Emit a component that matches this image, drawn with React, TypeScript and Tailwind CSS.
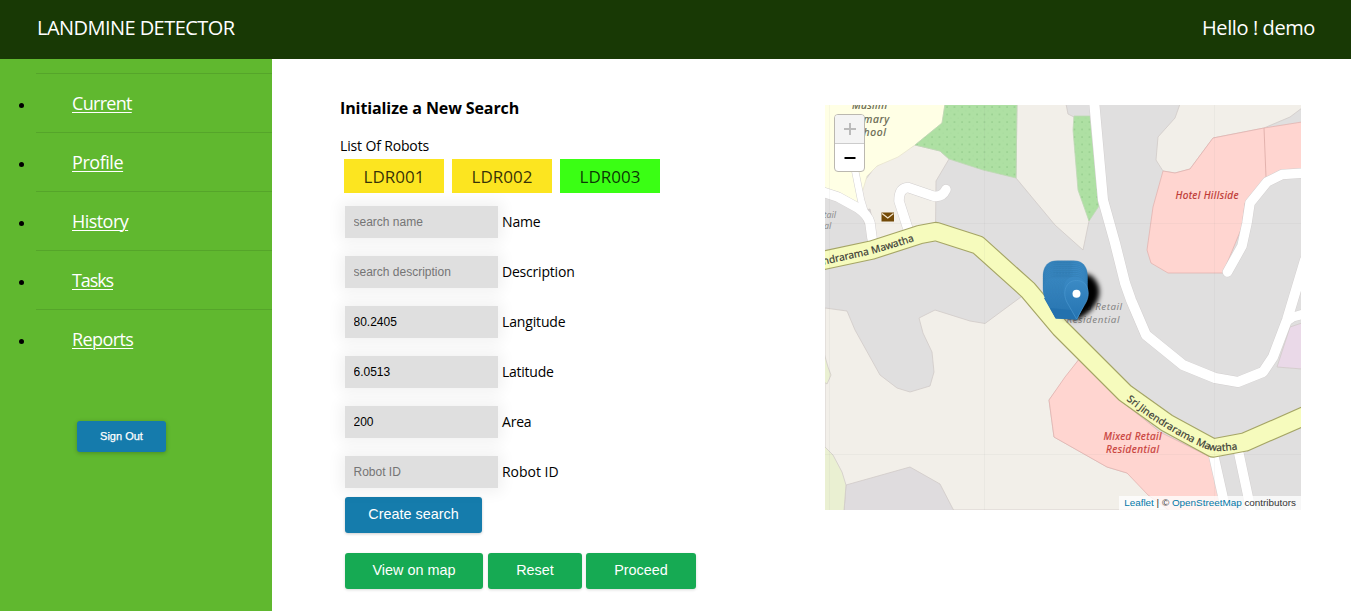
import React from "react";

const links = [
  { label: "Current", track: "tracking-[-0.7px]" },
  { label: "Profile", track: "tracking-[-0.45px]" },
  { label: "History", track: "tracking-[-0.55px]" },
  { label: "Tasks", track: "tracking-[-1.1px]" },
  { label: "Reports", track: "tracking-[-0.6px]" },
];

const robots = [
  { id: "LDR001", color: "bg-[#fce520]" },
  { id: "LDR002", color: "bg-[#fce520]" },
  { id: "LDR003", color: "bg-[#3aff14]" },
];

const fields = [
  { label: "Name", placeholder: "search name", value: "", track: "tracking-[-0.15px]" },
  { label: "Description", placeholder: "search description", value: "", track: "tracking-[-0.2px]" },
  { label: "Langitude", placeholder: "", value: "80.2405", track: "tracking-[-0.15px]" },
  { label: "Latitude", placeholder: "", value: "6.0513", track: "tracking-[-0.25px]" },
  { label: "Area", placeholder: "", value: "200", track: "tracking-[-0.2px]" },
  { label: "Robot ID", placeholder: "Robot ID", value: "", track: "tracking-[-0.02px]" },
];

const mainRoad =
  "M-10 157 L0 155 L47 145 L95 129.5 L111 126.5 L153 140 L203 185 L235 223 L300 288 L342 318 L388 343 L420 337 L484 309";

const whiteRoads = [
  { d: "M269 -5 L278 95 L290 138 L300 178 L306 195 L321 230 L358 260 L390 273 L413 277 L438 267 L448 252 L462 215 L468 195 L480 155", w: 10 },
  { d: "M462 216 L468 212 L482 208", w: 9 },
  { d: "M402.5 167 L417 141 L422 118 L425 98 L442 77 L457 69.5 L482 68", w: 9.5 },
  { d: "M83 124 L74 96 Q74 83 83 82.5 L108 91 Q117 93 121 84.5", w: 9.5 },
  { d: "M-5 86 L13 92 L33 103 Q43 110 45 118 L47 133", w: 9.5 },
  { d: "M29 60 L36 95 L40 108", w: 6.5 },
  { d: "M389 352 L402 410", w: 9.5 },
  { d: "M414 349 L427 410", w: 9.5 },
];

const pins: { x: number; y: number }[] = [];
for (let y = 197; y <= 214.1; y += 1.9) {
  for (let x = 230.5; x <= 250.6; x += 1.5) {
    pins.push({ x, y });
  }
}

const pinPath =
  "M0 0 L-10 -18 C-15 -28 -11.5 -41 0 -41 C11.5 -41 15 -28 10 -18 Z";

function StreetMap() {
  return (
    <svg width="476" height="405" viewBox="0 0 476 405" className="block">
      <defs>
        <pattern id="trees" width="7.5" height="7.5" patternUnits="userSpaceOnUse">
          <rect width="7.5" height="7.5" fill="#aee0a3" />
          <circle cx="2" cy="2" r="0.75" fill="#8fc787" />
          <circle cx="5.7" cy="5.7" r="0.5" fill="#a2d698" />
        </pattern>
        <linearGradient id="pin" x1="0" y1="0" x2="0" y2="1">
          <stop offset="0" stopColor="#3b8ac4" />
          <stop offset="1" stopColor="#2574b2" />
        </linearGradient>
        <filter id="soft" x="-50%" y="-50%" width="200%" height="200%">
          <feGaussianBlur stdDeviation="2.6" />
        </filter>
        <path id="road-west" d="M-65 173 L0 159.500 L47 149 Q75 141 95 134" />
        <path id="road-east" d="M299 293 Q320 311 342 323.500 Q366 338 384 345 Q398 348 425 342" />
      </defs>

      <rect width="476" height="405" fill="#e0dfdf" />

      <g stroke="#d0cac8" strokeWidth="0.8">
        <path fill="#f2efe9" d="M0 203 L22 206 L30 225 L55 270 L72 283 L85 287 L105 281 L109 267 L107 247 L98 228 L94 213 L110 205 L145 216 L160 218.500 L200 189 L255 253 L224 295 L229 332 L282 362 L302 368 L345 405 L0 405 Z" />
        <path fill="#dfdcde" d="M21 380 L85 362 L115 379 L129 406 L19 406 Z" />
        <path fill="#eaf0d2" d="M-1 341 L8 350 L17 367 L21 380 L19 406 L-1 406 Z" />
        <path fill="#eaf0d2" d="M-1 248 L3 262 L6 270 L2 279 L-1 277 Z" />
        <path fill="#f2efe9" d="M90 40 L115 46 L124 54 L111 76 L110.500 126 L50 146 L33 100 L38 78 L50 62 Z" />
        <path fill="#ffffe5" stroke="#e9e5cf" d="M-1 -1 L120 -1 L117 18 L90 40 L73 52 L52 61 L42 71 L37 88 L33 103 L13 92 L-1 86 Z" />
        <path fill="#f2efe9" d="M192 -1 L241 -1 L243 9 L249 12 L264 116 L258 145 L230 120 L191 73 Z" />
        <path fill="url(#trees)" stroke="#bfd8b5" d="M120 -1 L192 -1 L191 73 L158 65 L124 54 L115 46 L90 40 L117 18 Z" />
        <path fill="url(#trees)" stroke="#bfd8b5" d="M249 11 L265 11 L274 101 L264 116 L253 85 L248 25 Z" />
        <path fill="#f2efe9" d="M355 -1 L350 13 L333 32 L331 55 L338 66 L350 68 L365 64 L388 33 L439 23 L465 12 L477 3 L477 -1 Z" />
        <path fill="#ffd5d0" stroke="#e2b4b0" d="M388 33 L439 23 L477 17 L477 65 L442 72 L420 98 L417 122 L398 168 L343 168 L326 158 L322 145 L328 102 L338 66 L350 68 L365 64 Z" />
        <path fill="none" stroke="#dca9a5" d="M439 23 L441 72" />
        <path fill="#ffd5d0" stroke="#e2b4b0" d="M255 253 L295 295 L335 327 L385 352 L395 391 L400 406 L345 406 L323 390 L302 368 L282 362 L229 332 L224 295 L240 272 Z" />
        <path fill="#ead9e8" d="M477 218 L465 222 L452 262 L477 264 Z" />
        <path fill="#d5d3d5" d="M38 106 L45 104 L48 118 Z" />
      </g>

      <g fill="none" strokeLinejoin="round" strokeLinecap="round">
        {whiteRoads.map((r) => (
          <path key={r.d} d={r.d} stroke="#d3d0d0" strokeWidth={r.w + 1} />
        ))}
        {whiteRoads.map((r) => (
          <path key={r.d} d={r.d} stroke="#ffffff" strokeWidth={r.w} />
        ))}
      </g>
      <g fill="none" strokeLinejoin="round">
        <path d={mainRoad} stroke="#a5a566" strokeWidth="19.500" />
        <path d={mainRoad} stroke="#f6fbbd" strokeWidth="17.200" />
      </g>

      <path
        d="M4.500 0 V405 M159.500 0 V405 M389.500 0 V405 M0 118.500 H476 M0 349.500 H476"
        stroke="#8a8a8a"
        strokeOpacity="0.090"
        strokeWidth="0.800"
      />

      <g className="font-['Noto_Sans'] italic" fontSize="10.400" textAnchor="middle">
        <g fill="#66664f" stroke="#66664f" strokeWidth="0.200">
          <text x="44.500" y="3.500" textLength="35">Muslim</text>
          <text x="44" y="17.500" textLength="40">Primary</text>
          <text x="44" y="30.500" textLength="34">School</text>
        </g>
        <g fill="#8d8d8d" fontSize="8.800">
          <text x="0" y="112.500">Retail</text>
          <text x="-15" y="124">Residential</text>
        </g>
        <g fill="#858585" fontSize="9.800">
          <text x="268" y="205" textLength="58">Mixed Retail</text>
          <text x="268" y="218" textLength="53">Residential</text>
        </g>
        <g fill="#c9423c" stroke="#c9423c" strokeWidth="0.200" fontSize="10">
          <text x="382" y="93.500" fill="#b93632" textLength="63">Hotel Hillside</text>
          <text x="307.500" y="335" textLength="58">Mixed Retail</text>
          <text x="307.500" y="348" textLength="53">Residential</text>
        </g>
      </g>

      <g className="font-['Noto_Sans']" fill="#3b3b35" stroke="#3b3b35" strokeWidth="0.200" fontSize="10.100">
        <text textAnchor="end">
          <textPath href="#road-west" startOffset="158.500">Sri Jinendrarama Mawatha</textPath>
        </text>
        <text>
          <textPath href="#road-east" startOffset="3">Sri Jinendrarama Mawatha</textPath>
        </text>
      </g>

      <g>
        <rect x="56.500" y="107.500" width="12.500" height="9" fill="#734a08" />
        <path d="M57 108.500 L62.800 113 L68.500 108.500" fill="none" stroke="#f5e7cf" strokeWidth="1.200" />
      </g>

      <path
        d="M259 168 L267 171 Q276 180 274 191 Q270 206 252 215 L238 212 Z"
        fill="#000000"
        filter="url(#soft)"
      />
      <path d="M219 193 L230.500 213.500 L252 214.500 L262 194 Z" fill="#2471ae" />
      <g stroke="#3079ae" strokeWidth="0.350" fill="url(#pin)">
        {pins.map((p, i) => (
          <path key={i} d={pinPath} transform={`translate(${p.x} ${p.y})`} />
        ))}
      </g>
      <path d="M225 203 L231 213.500 L252 214.500 L256 206 Z" fill="#2371ae" />
      <g transform="translate(251.500 214)">
        <path d={pinPath} fill="url(#pin)" stroke="#4a97cf" strokeWidth="0.700" transform="scale(0.96 0.94)" />
        <circle cx="0" cy="-25.200" r="4" fill="#ffffff" />
      </g>
    </svg>
  );
}

function GreenButton({ width, children }: { width: string; children: string }) {
  return (
    <button
      className={`h-9 rounded-[3px] bg-[#16aa53] font-['Liberation_Sans',sans-serif] text-[14.4px] text-white shadow-[0_1px_3px_rgba(0,0,0,0.15)] ${width}`}
    >
      {children}
    </button>
  );
}

export default function App() {
  return (
    <div className="flex h-[611px] w-[1351px] flex-col overflow-hidden bg-white font-['Open_Sans',sans-serif] text-black">
      <header className="flex h-[59px] shrink-0 items-center justify-between bg-[#183905] pr-9 pb-[3px] pl-[37px] text-[20px] text-white">
        <span className="tracking-[-0.55px]">LANDMINE DETECTOR</span>
        <span className="tracking-[-0.4px]">Hello ! demo</span>
      </header>

      <div className="flex min-h-0 flex-1">
        <aside className="w-[272px] shrink-0 bg-[#60b82f] pt-[14px]">
          <ul className="pl-9">
            {links.map((link) => (
              <li
                key={link.label}
                className="relative flex h-[59px] items-center border-t border-[#55a52a] pl-9 text-[18px]"
              >
                <span className="absolute top-[29px] -left-[17px] size-[5px] rounded-full bg-black" />
                <a className={`text-white underline decoration-1 underline-offset-2 ${link.track}`}>{link.label}</a>
              </li>
            ))}
          </ul>
          <button className="mt-[53px] ml-[77px] block h-[31px] w-[89px] rounded-[3px] bg-[#157bac] font-['Liberation_Sans',sans-serif] text-[11px] text-white shadow-[0_1px_4px_rgba(0,0,0,0.25)] [-webkit-text-stroke:0.25px_white]">
            Sign Out
          </button>
        </aside>

        <main className="flex flex-1">
          <section className="w-[553px] pt-[37px] pl-[68px]">
            <h1 className="h-[24px] text-[16px] leading-6 font-bold tracking-[-0.1px]">Initialize a New Search</h1>
            <p className="mt-4 h-[20px] text-[14px] leading-5 tracking-[-0.15px]">List Of Robots</p>
            <div className="mt-[3px] flex gap-2 pl-1">
              {robots.map((r) => (
                <div
                  key={r.id}
                  className={`flex h-[34px] w-[100px] items-center justify-center pt-px text-[17px] text-black/80 ${r.color}`}
                >
                  {r.id}
                </div>
              ))}
            </div>
            <div className="mt-[13px] flex flex-col gap-[18px] pl-[5px]">
              {fields.map((f) => (
                <label key={f.label} className="flex h-8 items-center gap-1 text-[14px]">
                  <input
                    className="h-8 w-[153px] bg-[#dfdfdf] pr-2 pl-[8.5px] font-['Liberation_Sans',sans-serif] text-[12px] shadow-[0_0_15px_4px_rgba(0,0,0,0.06)] placeholder:text-[#757575]"
                    placeholder={f.placeholder}
                    defaultValue={f.value}
                  />
                  <span className={`pb-[2px] ${f.track}`}>{f.label}</span>
                </label>
              ))}
            </div>
            <div className="mt-[9px] pl-[5px]">
              <button className="block h-9 w-[137px] rounded-[3px] bg-[#157cac] font-['Liberation_Sans',sans-serif] text-[14.4px] text-white shadow-[0_1px_3px_rgba(0,0,0,0.2)]">
                Create search
              </button>
            </div>
            <div className="mt-5 flex pl-[5px]">
              <GreenButton width="w-[138px]">View on map</GreenButton>
              <GreenButton width="ml-[5px] w-[94px]">Reset</GreenButton>
              <GreenButton width="ml-1 w-[110px]">Proceed</GreenButton>
            </div>
          </section>

          <section className="pt-[46px]">
            <div className="relative h-[405px] w-[476px] overflow-hidden">
              <StreetMap />
              <div className="absolute top-[9px] left-[9px] w-[31px] overflow-hidden rounded border border-[#bbb8b0] bg-white">
                <div className="flex h-[29px] items-center justify-center border-b border-[#ccc] bg-[#f4f4f4]">
                  <svg width="12" height="12" stroke="#bbbbbb" strokeWidth="2">
                    <path d="M0 6 H12 M6 0 V12" />
                  </svg>
                </div>
                <div className="flex h-[27px] items-center justify-center">
                  <svg width="12" height="12" stroke="#000000" strokeWidth="2">
                    <path d="M0.500 6 H11.500" />
                  </svg>
                </div>
              </div>
              <div className="absolute right-0 bottom-0 h-[14px] bg-white/75 px-[5px] font-['Liberation_Sans',sans-serif] text-[9.900px] leading-[14px] whitespace-nowrap text-[#333]">
                <a className="text-[#0078a8]">Leaflet</a> | © <a className="text-[#0078a8]">OpenStreetMap</a> contributors
              </div>
            </div>
          </section>
        </main>
      </div>
    </div>
  );
}
